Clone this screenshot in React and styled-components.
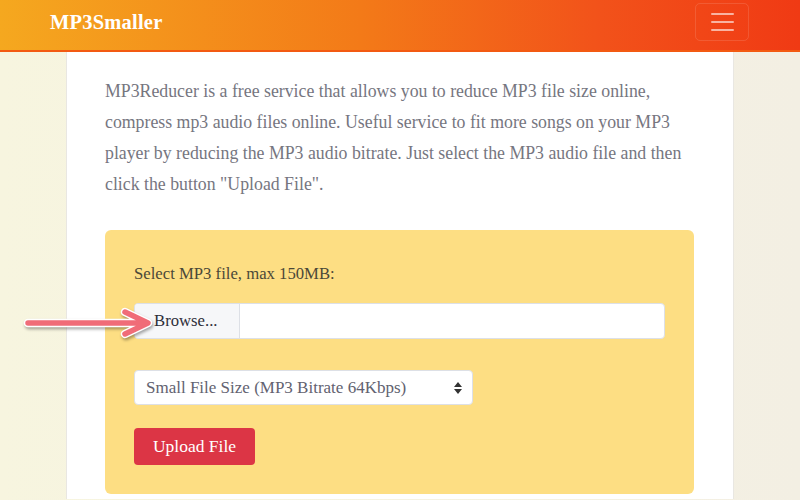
import React from "react";
import styled, { createGlobalStyle } from "styled-components";

const GlobalStyle = createGlobalStyle`
  html, body {
    margin: 0;
    padding: 0;
  }
  body {
    font-family: "Liberation Serif", "DejaVu Serif", serif;
    background: linear-gradient(90deg, #f7f5df 0%, #f5f2e2 50%, #f3efe3 100%);
    overflow: hidden;
  }
`;

const Navbar = styled.header`
  display: flex;
  align-items: center;
  justify-content: space-between;
  padding: 3px 51px 9px 50px;
  background: linear-gradient(90deg, #f5a81f 0%, #f37a18 45%, #f2521a 75%, #f03a14 100%);
  border-bottom: 2px solid #f35a12;
`;

const Brand = styled.a`
  color: #fff;
  font-weight: 700;
  font-size: 20.5px;
  letter-spacing: 0.2px;
  text-decoration: none;
  line-height: 38px;
`;

const Toggler = styled.button`
  width: 54px;
  height: 38px;
  border: 1px solid rgba(255, 255, 255, 0.12);
  border-radius: 5px;
  background: transparent;
  display: flex;
  flex-direction: column;
  align-items: center;
  justify-content: center;
  gap: 6px;
  padding: 0;
`;

const TogglerBar = styled.span`
  display: block;
  width: 23px;
  height: 2px;
  background: rgba(255, 255, 255, 0.6);
  border-radius: 1px;
`;

const Container = styled.main`
  position: relative;
  width: 668px;
  margin: 0 auto;
  box-sizing: border-box;
  background: #fff;
  border-left: 1px solid #e9e7e2;
  border-right: 1px solid #e9e7e2;
  padding: 24px 39px 5px 38px;
`;

const Intro = styled.p`
  margin: 0 0 30px;
  color: #76767f;
  font-size: 17.8px;
  line-height: 31px;
  white-space: nowrap;
`;

const Panel = styled.section`
  background: #fdde83;
  border-radius: 6px;
  padding: 31px 29px 29px;
`;

const Label = styled.div`
  color: #4b4838;
  font-size: 16.7px;
  line-height: 26px;
  margin-bottom: 16px;
`;

const FileGroup = styled.div`
  display: flex;
  width: 531px;
  height: 36px;
  box-sizing: border-box;
  border: 1px solid #dde0e6;
  border-radius: 4px;
  background: #fff;
  overflow: hidden;
  margin-bottom: 31px;
`;

const BrowseButton = styled.label`
  display: flex;
  align-items: center;
  padding: 0 19px;
  width: 105px;
  box-sizing: border-box;
  background: #f6f7f9;
  border-right: 1px solid #dde0e6;
  color: #2e2e3a;
  font-size: 16.7px;
  cursor: pointer;
`;

const HiddenInput = styled.input`
  display: none;
`;

const FileName = styled.div`
  flex: 1;
`;

const SelectWrap = styled.div`
  position: relative;
  width: 339px;
  margin-bottom: 23px;
`;

const Select = styled.select`
  appearance: none;
  -webkit-appearance: none;
  width: 100%;
  height: 35px;
  box-sizing: border-box;
  border: 1px solid #dde0e6;
  border-radius: 4px;
  background: #fff;
  padding: 0 30px 0 11px;
  font-family: inherit;
  font-size: 17px;
  color: #626270;
  outline: none;
`;

const Caret = styled.svg`
  position: absolute;
  right: 11px;
  top: 50%;
  transform: translateY(-50%);
  pointer-events: none;
`;

const UploadButton = styled.button`
  display: block;
  width: 121px;
  height: 37px;
  border: none;
  border-radius: 4px;
  background: #dc3545;
  color: #fff;
  font-family: inherit;
  font-size: 17.5px;
  cursor: pointer;
`;

const Pointer = styled.svg`
  position: absolute;
  left: -45px;
  top: 254px;
  overflow: visible;
  filter: drop-shadow(1px 2px 1.5px rgba(0, 0, 0, 0.35));
`;

function ArrowPointer() {
  const d = "M6 17 H124 M103 6 L126 17 L103 28";
  return (
    <Pointer width="135" height="34" viewBox="0 0 135 34">
      <path d={d} fill="none" stroke="#fff" strokeWidth="8.5" strokeLinecap="round" strokeLinejoin="round" />
      <path d={d} fill="none" stroke="#f06c78" strokeWidth="5.5" strokeLinecap="round" strokeLinejoin="round" />
    </Pointer>
  );
}

export default function App() {
  return (
    <>
      <GlobalStyle />
      <Navbar>
        <Brand href="#">MP3Smaller</Brand>
        <Toggler aria-label="Toggle navigation">
          <TogglerBar />
          <TogglerBar />
          <TogglerBar />
        </Toggler>
      </Navbar>
      <Container>
        <Intro>
          MP3Reducer is a free service that allows you to reduce MP3 file size online,
          <br />
          compress mp3 audio files online. Useful service to fit more songs on your MP3
          <br />
          player by reducing the MP3 audio bitrate. Just select the MP3 audio file and then
          <br />
          click the button "Upload File".
        </Intro>
        <Panel>
          <Label>Select MP3 file, max 150MB:</Label>
          <FileGroup>
            <BrowseButton htmlFor="mp3file">Browse...</BrowseButton>
            <HiddenInput id="mp3file" type="file" accept=".mp3" />
            <FileName />
          </FileGroup>
          <SelectWrap>
            <Select defaultValue="64">
              <option value="64">Small File Size (MP3 Bitrate 64Kbps)</option>
              <option value="96">Medium File Size (MP3 Bitrate 96Kbps)</option>
              <option value="128">Large File Size (MP3 Bitrate 128Kbps)</option>
            </Select>
            <Caret width="8" height="12" viewBox="0 0 8 12">
              <path d="M4 0 L8 5 H0 Z M0 7 H8 L4 12 Z" fill="#333" />
            </Caret>
          </SelectWrap>
          <UploadButton type="button">Upload File</UploadButton>
        </Panel>
        <ArrowPointer />
      </Container>
    </>
  );
}
